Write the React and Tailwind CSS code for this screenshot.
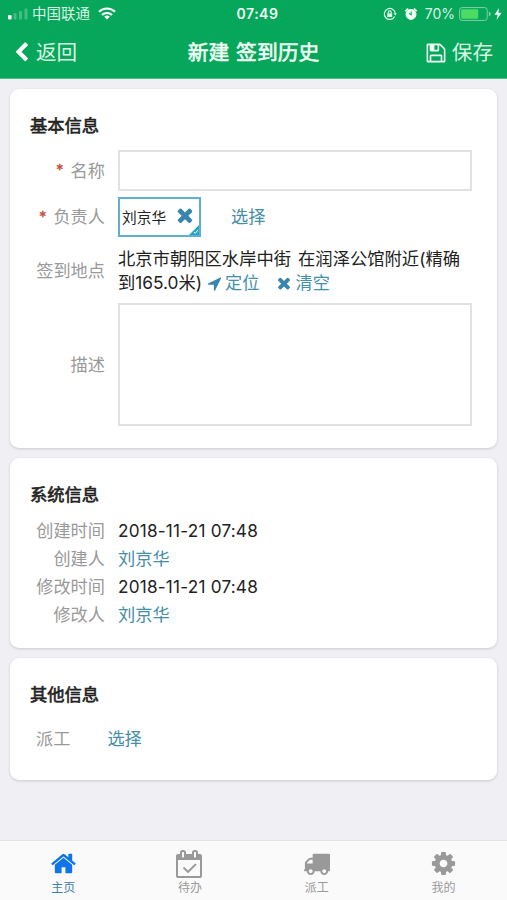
import React from "react";

const PATHS = {
  home: "M1472 992v480q0 26-19 45t-45 19h-384v-384h-256v384h-384q-26 0-45-19t-19-45v-480q0-1 .5-3t.5-3l575-474 575 474q1 2 1 6zm223-69l-62 74q-8 9-21 11h-3q-13 0-21-7l-692-577-692 577q-12 8-24 7-13-2-21-11l-62-74q-8-10-7-23.5t11-21.5l719-599q32-26 76-26t76 26l244 204v-195q0-14 9-23t23-9h192q14 0 23 9t9 23v408l219 182q10 8 11 21.5t-7 23.5z",
  times: "M1490 1322q0 40-28 68l-136 136q-28 28-68 28t-68-28l-294-294-294 294q-28 28-68 28t-68-28l-136-136q-28-28-28-68t28-68l294-294-294-294q-28-28-28-68t28-68l136-136q28-28 68-28t68 28l294 294 294-294q28-28 68-28t68 28l136 136q28 28 28 68t-28 68l-294 294 294 294q28 28 28 68z",
  truck: "M640 1408q0-52-38-90t-90-38-90 38-38 90 38 90 90 38 90-38 38-90zm-384-512h384v-256h-158q-13 0-22 9l-195 195q-9 9-9 22v30zm1280 512q0-52-38-90t-90-38-90 38-38 90 38 90 90 38 90-38 38-90zm256-1088v1024q0 15-4 26.5t-13.5 18.5-16.5 11.5-23.5 6-22.5 2-25.5 0-22.5-.5q0 106-75 181t-181 75-181-75-75-181h-384q0 106-75 181t-181 75-181-75-75-181h-64q-3 0-22.5.5t-25.5 0-22.5-2-23.5-6-16.5-11.5-13.5-18.5-4-26.5q0-26 19-45t45-19v-320q0-8-.5-35t0-38 2.5-34.5 6.5-37 14-30.5 22.5-30l198-198q19-19 50.5-32t58.5-13h160v-192q0-26 19-45t45-19h1024q26 0 45 19t19 45z",
  cog: "M1152 896q0-106-75-181t-181-75-181 75-75 181 75 181 181 75 181-75 75-181zm512-109v222q0 12-8 23t-20 13l-185 28q-19 54-39 91 35 50 107 138 10 12 10 25t-9 23q-27 37-99 108t-94 71q-12 0-26-9l-138-108q-44 23-91 38-16 136-29 186-7 28-36 28h-222q-14 0-24.5-8.5t-11.5-21.5l-28-184q-49-16-90-37l-141 107q-10 9-25 9-14 0-25-11-126-114-165-168-7-10-7-23 0-12 8-23 15-21 51-66.5t54-70.5q-27-50-41-99l-183-27q-13-2-21-12.5t-8-23.5v-222q0-12 8-23t19-13l186-28q14-46 39-92-40-57-107-138-10-12-10-24 0-10 9-23 26-36 98.5-107.5t94.5-71.5q13 0 26 10l138 107q44-23 91-38 16-136 29-186 7-28 36-28h222q14 0 24.5 8.5t11.5 21.5l28 184q49 16 90 37l142-107q9-9 24-9 13 0 25 10 129 119 165 170 7 8 7 22 0 12-8 23-15 21-51 66.5t-54 70.5q26 50 41 98l183 28q13 2 21 12.5t8 23.5z",
  calendar: "M1303 964l-512 512q-10 9-23 9t-23-9l-288-288q-9-10-9-23t9-22l46-46q9-9 22-9t23 9l220 220 444-444q10-9 23-9t22 9l46 46q9 9 9 22t-9 23zm-1175 700h1408v-1024h-1408v1024zm384-1216v-288q0-14-9-23t-23-9h-64q-14 0-23 9t-9 23v288q0 14 9 23t23 9h64q14 0 23-9t9-23zm768 0v-288q0-14-9-23t-23-9h-64q-14 0-23 9t-9 23v288q0 14 9 23t23 9h64q14 0 23-9t9-23zm384-64v1280q0 52-38 90t-90 38h-1408q-52 0-90-38t-38-90v-1280q0-52 38-90t90-38h128v-96q0-66 47-113t113-47h64q66 0 113 47t47 113v96h384v-96q0-66 47-113t113-47h64q66 0 113 47t47 113v96h128q52 0 90 38t38 90z",
  arrow: "M1593 349l-640 1280q-17 35-57 35-5 0-15-2-22-5-35.5-22.5t-13.5-39.5v-576h-576q-22 0-39.5-13.5t-22.5-35.5 4-42 29-30l1280-640q13-7 29-7 27 0 45 19 15 14 18.5 34.5t-6.5 39.5z",
  back: "M1427 301l-531 531 531 531q19 19 19 45t-19 45l-166 166q-19 19-45 19t-45-19l-742-742q-19-19-19-45t19-45l742-742q19-19 45-19t45 19l166 166q19 19 19 45t-19 45z",
  save: "M512 1536h768v-384h-768v384zm896 0h128v-896q0-14-10-38.5t-20-34.5l-281-281q-10-10-34-20t-39-10v416q0 40-28 68t-68 28h-576q-40 0-68-28t-28-68v-416h-128v1280h128v-416q0-40 28-68t68-28h832q40 0 68 28t28 68v416zm-384-928v-320q0-13-9.5-22.5t-22.5-9.5h-192q-13 0-22.5 9.5t-9.5 22.5v320q0 13 9.5 22.5t22.5 9.5h192q13 0 22.5-9.5t9.5-22.5zm640 32v928q0 40-28 68t-68 28h-1344q-40 0-68-28t-28-68v-1344q0-40 28-68t68-28h928q40 0 88 20t76 48l280 280q28 28 48 76t20 88z",
};

function Icon({ name, className }) {
  return (
    <svg viewBox="0 0 1792 1792" fill="currentColor" className={`shrink-0 overflow-visible ${className}`}>
      <path d={PATHS[name]} />
    </svg>
  );
}

function StatusBar() {
  return (
    <div className="grid h-[27px] grid-cols-[1fr_auto_1fr] items-center pl-2 pr-[5px] text-[14.5px] leading-[27px] text-[#d9f5e4]">
      <div className="flex items-center">
        <svg viewBox="0 0 20 12" className="h-3 w-5 shrink-0" fill="#fff">
          <rect x="0" y="7" width="3.6" height="4.5" rx="1" />
          <rect x="5.5" y="5" width="3" height="6.5" rx="1" opacity=".25" />
          <rect x="11" y="3" width="3" height="8.5" rx="1" opacity=".25" />
          <rect x="16.5" y="0.5" width="3" height="11" rx="1" opacity=".25" />
        </svg>
        <span className="ml-1">中国联通</span>
        <svg viewBox="0 0 18 13" className="ml-2 h-[13px] w-[18px]" fill="none" stroke="#fff" strokeWidth="2.2">
          <path d="M1 4.8a11.4 11.4 0 0 1 16 0M4 8a7.2 7.2 0 0 1 10 0" />
          <path d="M9 12.6 6.2 9.8a4 4 0 0 1 5.6 0z" fill="#fff" stroke="none" />
        </svg>
      </div>
      <div className="pl-[5px] text-[14px] font-semibold tracking-[0.5px] text-[#effff5]">07:49</div>
      <div className="flex items-center justify-end">
        <svg viewBox="0 0 14 14" className="h-[14px] w-[14px]" fill="none" stroke="#d9f5e4" strokeWidth="1.2">
          <path d="M11.7 9.5A5.5 5.5 0 1 1 12.3 6.5" />
          <path d="M10.5 6.2h3.4l-1.7 2.3z" fill="#d9f5e4" stroke="none" />
          <rect x="4.2" y="6.3" width="5" height="3.7" fill="#d9f5e4" stroke="none" />
          <path d="M5.2 6.5V5.3a1.5 1.5 0 0 1 3 0v1.2" />
        </svg>
        <svg viewBox="0 0 14 14" className="ml-[7px] h-[14px] w-[14px]" fill="none" stroke="#effff5">
          <circle cx="7" cy="7.4" r="5" fill="#effff5" />
          <path d="M1.3 4.2 4.2 1.6M12.7 4.2 9.8 1.6" strokeWidth="1.8" />
          <path d="M7.2 4.5v3.2L5 6.4" stroke="#06a65b" strokeWidth="1.1" />
        </svg>
        <span className="ml-[7px] text-[14px]">70%</span>
        <svg viewBox="0 0 32 14" className="ml-1 h-[14px] w-8">
          <rect x=".6" y=".6" width="27.6" height="12.8" rx="2.5" fill="none" stroke="#7fd3a4" />
          <rect x="2.2" y="2.2" width="17" height="9.6" rx="1" fill="#4cdc64" />
          <path d="M29.8 4.5q2 .8 2 2.5t-2 2.5z" fill="#7fd3a4" />
        </svg>
        <svg viewBox="0 0 8 12" className="ml-[3px] h-3 w-2" fill="#effff5">
          <path d="M5 0 .5 6.8H3.6L2.6 12 7.6 4.8H4.4z" />
        </svg>
      </div>
    </div>
  );
}

function Header() {
  return (
    <header className="h-[79px] shrink-0 border-b border-[#4cbd87] bg-[#06a65b] text-[#effff5]">
      <StatusBar />
      <div className="grid h-[51px] grid-cols-[1fr_auto_1fr] items-center pl-[11px] pr-[14px] text-[20.6px] leading-[51px]">
        <div className="flex items-center text-[#d9f5e4]">
          <Icon name="back" className="h-[21px] w-[21px] text-white" />
          <span className="ml-1">返回</span>
        </div>
        <h1 className="pl-[3px] text-[20.8px] font-normal [-webkit-text-stroke:0.6px_#effff5] [word-spacing:1px]">新建 签到历史</h1>
        <div className="flex items-center justify-end">
          <Icon name="save" className="h-[22px] w-[22px]" />
          <span className="ml-[5px] text-[#d9f5e4]">保存</span>
        </div>
      </div>
    </header>
  );
}

function Card({ title, className, children }) {
  return (
    <section className={`rounded-[9px] bg-white shadow-[0_1px_3px_rgba(0,0,0,0.16)] ${className}`}>
      <h2 className="ml-5 pt-6 text-[17.3px] font-normal leading-[26px] text-[#222] [-webkit-text-stroke:0.6px_#222]">{title}</h2>
      {children}
    </section>
  );
}

function Label({ required, children }) {
  return (
    <div className="flex w-[95px] shrink-0 items-center justify-end text-[#999]">
      {required && <span className="mr-[7px] text-[15px] text-[#c4513c] [-webkit-text-stroke:0.4px_#c4513c]">*</span>}
      {children}
    </div>
  );
}

function Tab({ icon, label, iconClass, active }) {
  return (
    <div className={`flex flex-col items-center ${active ? "text-[#3f7fa8]" : "text-[#999]"}`}>
      <div className="flex h-[38px] items-end justify-center">
        <Icon name={icon} className={iconClass} />
      </div>
      <span className="text-xs leading-[18px]">{label}</span>
    </div>
  );
}

export default function App() {
  return (
    <div className="flex h-[900px] w-[507px] flex-col overflow-hidden bg-[#efeff4] font-[Inter,'Noto_Sans_CJK_SC',sans-serif] text-[17.2px] text-[#222]">
      <Header />
      <main className="flex flex-1 flex-col gap-[10px] px-[10px] pt-[10px]">
        <Card title="基本信息" className="h-[359px]">
          <div className="mt-[11px] flex h-[41px]">
            <Label required>名称</Label>
            <div className="ml-[13px] w-[354px] border-2 border-[#e1e1e1]" />
          </div>
          <div className="mt-[6px] flex h-[40px] items-center">
            <Label required>负责人</Label>
            <div className="relative ml-[13px] flex h-10 w-[83px] items-center border-2 border-[#5fb0cf] pl-[2px] text-[14.7px]">
              <span className="pt-[2px]">刘京华</span>
              <Icon name="times" className="mb-1 ml-2 h-[22px] w-[22px] text-[#3885b0]" />
              <svg viewBox="0 0 10 10" className="absolute bottom-0 right-0 h-[10px] w-[10px]">
                <path d="M10 0v10H0z" fill="#24a5c8" />
                <path d="m5 7 1.3 1.3L9 5" fill="none" stroke="#fff" />
              </svg>
            </div>
            <span className="ml-[30px] text-[#468ea6]">选择</span>
          </div>
          <div className="mt-[10px] flex h-12 leading-6">
            <Label>签到地点</Label>
            <div className="ml-[13px]">
              <div className="whitespace-nowrap text-[17.3px] [word-spacing:2px] tracking-[0.03px]">北京市朝阳区水岸中街 在润泽公馆附近(精确</div>
              <div className="flex items-center whitespace-nowrap text-[#4590ad]">
                <span className="text-[17.3px] text-[#222]">到165.0米)</span>
                <Icon name="arrow" className="ml-1 h-[17px] w-[17px] text-[#3885b0]" />
                <span className="ml-[2px]">定位</span>
                <Icon name="times" className="ml-[15px] h-[18px] w-[18px] text-[#3885b0]" />
                <span className="ml-[3px]">清空</span>
              </div>
            </div>
          </div>
          <div className="mt-[8px] flex h-[123px]">
            <Label>描述</Label>
            <div className="ml-[13px] w-[354px] border-2 border-[#e1e1e1]" />
          </div>
        </Card>
        <Card title="系统信息" className="h-[190px]">
          <div className="mt-[9px] leading-[28px]">
            <div className="flex"><Label>创建时间</Label><span className="ml-[13px] tracking-[0.2px]">2018-11-21 07:48</span></div>
            <div className="flex"><Label>创建人</Label><span className="ml-[13px] text-[#468ea6]">刘京华</span></div>
            <div className="flex"><Label>修改时间</Label><span className="ml-[13px] tracking-[0.2px]">2018-11-21 07:48</span></div>
            <div className="flex"><Label>修改人</Label><span className="ml-[13px] text-[#468ea6]">刘京华</span></div>
          </div>
        </Card>
        <Card title="其他信息" className="h-[122px]">
          <div className="ml-[26px] mt-[17px] flex gap-[37px] leading-[28px]">
            <span className="text-[#999]">派工</span>
            <span className="text-[#468ea6]">选择</span>
          </div>
        </Card>
      </main>
      <nav className="grid h-[60px] shrink-0 grid-cols-4 border-t border-[#e3e3e6] bg-[#fafafa]">
        <Tab icon="home" label="主页" iconClass="mb-[2px] h-[27px] w-[27px] text-[#0f74e8]" active />
        <Tab icon="calendar" label="待办" iconClass="mb-px h-7 w-7" />
        <Tab icon="truck" label="派工" iconClass="mb-[2px] h-[27px] w-[27px]" />
        <Tab icon="cog" label="我的" iconClass="mb-[2px] h-[27px] w-[27px]" />
      </nav>
    </div>
  );
}
